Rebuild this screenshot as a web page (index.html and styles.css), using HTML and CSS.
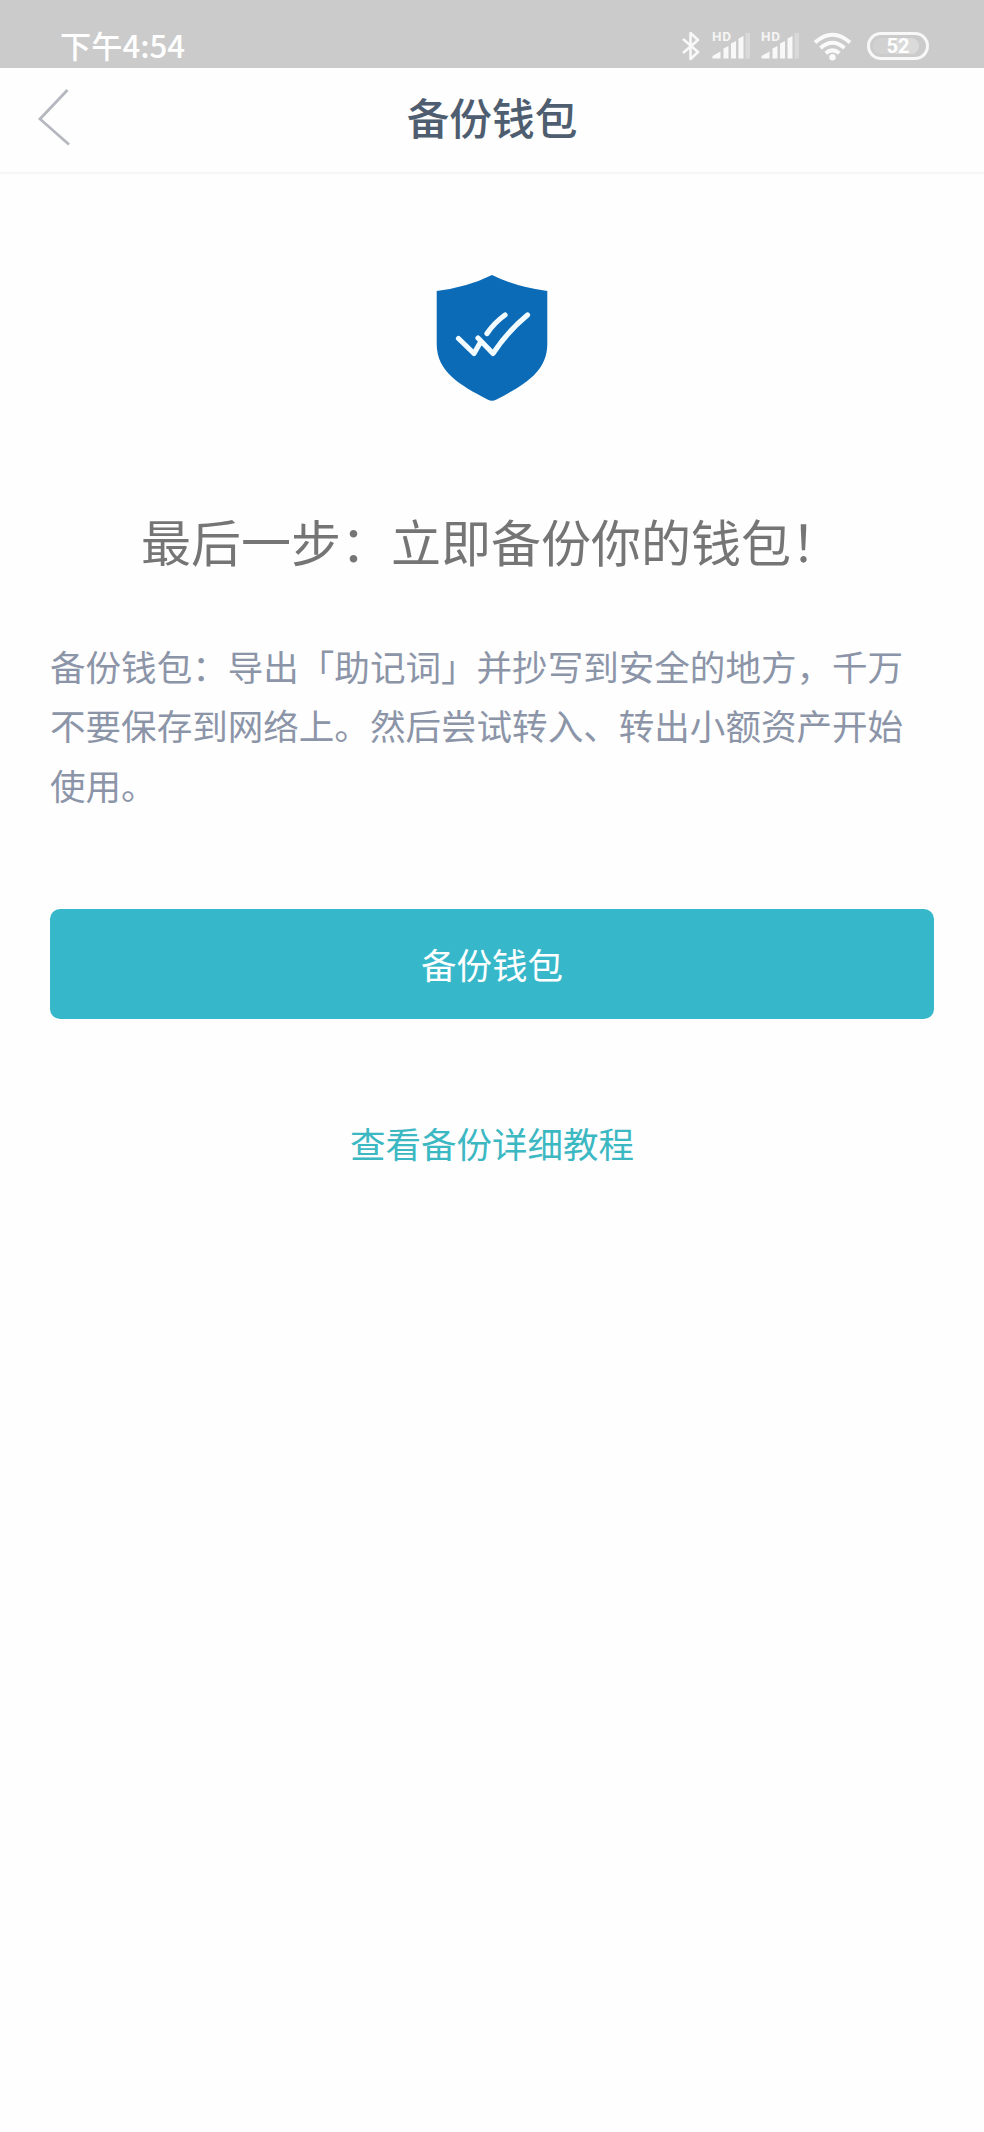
FILE: index.html
```html
<!DOCTYPE html>
<html lang="zh-CN">
<head>
<meta charset="utf-8">
<title>备份钱包</title>
<link rel="stylesheet" href="styles.css">
</head>
<body>
<div class="status">
  <span class="time">下午4:54</span>
  <div class="indicators">
    <svg class="bluetooth" width="20" height="32" viewBox="0 0 20 32"><path d="M2 9L17 22L9.500 29V3L17 10L2 23"/></svg>
    <div class="signal">
      <span class="hd">HD</span>
      <svg width="38" height="28" viewBox="0 0 38 28"><path d="M0.500 26.500V24L8.500 19.500V26.500ZM11.500 26.500V16.500L16.500 14V26.500ZM19 26.500V11.500L24 9V26.500ZM26.500 26.500V6.500L31.500 4V26.500Z"/><path class="faint" d="M33.500 26.500V1H38V26.500Z"/></svg>
    </div>
    <div class="signal">
      <span class="hd">HD</span>
      <svg width="38" height="28" viewBox="0 0 38 28"><path d="M0.500 26.500V24L8.500 19.500V26.500ZM11.500 26.500V16.500L16.500 14V26.500ZM19 26.500V11.500L24 9V26.500ZM26.500 26.500V6.500L31.500 4V26.500Z"/><path class="faint" d="M33.500 26.500V1H38V26.500Z"/></svg>
    </div>
    <svg class="wifi" width="40" height="30" viewBox="0 0 40 30"><path d="M2 10.500Q19.500 -5 37 10.500M7.500 16Q19.500 5.500 31.500 16M12.700 21.300Q19.500 15.500 26.300 21.300"/><circle cx="19.500" cy="25.300" r="3.200"/></svg>
    <div class="battery"><span class="charge"></span><span class="level">52</span></div>
  </div>
</div>
<header class="navbar">
  <svg class="back" width="34" height="60" viewBox="0 0 34 60"><path d="M31.500 2L4 31L33 56.500"/></svg>
  <h1 class="title">备份钱包</h1>
</header>
<main class="content">
  <svg class="shield" width="112" height="128" viewBox="0 0 112 128"><path class="body" d="M56 1Q80 13 111.300 17V70C111.300 98 88 111 60.500 125.500Q56 128 51.500 125.500C24 111 0.700 98 0.700 70V17Q32 13 56 1Z"/><path class="check" d="M22.500 64.500L38 79.500L44 69M42 64L57 79.500Q72 57 91.500 41M51 59.500Q58 49 69 41"/></svg>
  <h2 class="heading">最后一步：立即备份你的钱包！</h2>
  <p class="description">备份钱包：导出「助记词」并抄写到安全的地方，千万<br>不要保存到网络上。然后尝试转入、转出小额资产开始<br>使用。</p>
  <button class="primary">备份钱包</button>
  <a class="tutorial">查看备份详细教程</a>
</main>
</body>
</html>
```
FILE: styles.css
```css
* { box-sizing: border-box; }
body {
  margin: 0;
  min-height: 2132px;
  background: #fefefe;
  font-family: "Noto Sans CJK SC", sans-serif;
}
svg { display: block; flex: none; }
.status {
  display: flex;
  justify-content: space-between;
  align-items: flex-start;
  height: 68px;
  padding: 0 55px 0 60px;
  background: #cbcbcb;
  color: #fff;
}
.time {
  padding-top: 25px;
  font-size: 31.2px;
  font-weight: 500;
  line-height: 40px;
}
.indicators { display: flex; padding-top: 30px; }
.bluetooth {
  margin-right: 11px;
  fill: none;
  stroke: #f8f8f8;
  stroke-width: 2.6;
  stroke-linejoin: round;
}
.signal {
  position: relative;
  width: 38px;
  height: 32px;
  margin-right: 11px;
  padding-top: 2px;
  fill: #f8f8f8;
}
.faint { fill: #d9d9d9; }
.hd {
  position: absolute;
  left: 0;
  top: 0;
  font: bold 13.5px/13px Roboto, sans-serif;
  letter-spacing: 0.6px;
  color: #f5f5f5;
}
.wifi { margin: 2px 14px 0 3px; fill: none; stroke: #fafafa; stroke-width: 4; }
.wifi circle { fill: #fafafa; stroke: none; }
.battery {
  display: flex;
  justify-content: center;
  align-items: center;
  position: relative;
  width: 62px;
  height: 28px;
  margin-top: 2px;
  border: 3px solid #f8f8f8;
  border-radius: 14px;
}
.charge {
  position: absolute;
  left: 3px;
  top: 3px;
  width: 46px;
  height: 16px;
  border-radius: 8px;
  background: linear-gradient(90deg, #d1d1d1 50%, #dadada 50%);
}
.level { position: relative; font: bold 20px/22px Roboto, sans-serif; }
.navbar {
  display: grid;
  grid-template-columns: 100px 1fr 100px;
  height: 106px;
  border-bottom: 2px solid #f6f6f6;
}
.back { margin: 20px 0 0 36px; fill: none; stroke: #b5b8be; stroke-width: 2.8; }
.title {
  margin: 0;
  color: #4e5d6f;
  font-size: 42.7px;
  font-weight: 500;
  line-height: 97px;
  text-align: center;
}
.content {
  display: flex;
  flex-direction: column;
  align-items: center;
  padding: 100px 50px 0;
}
.shield .body { fill: #0b6bb7; }
.shield .check {
  fill: none;
  stroke: #f2fbff;
  stroke-width: 5.2;
  stroke-linecap: round;
  stroke-linejoin: round;
}
.heading {
  align-self: stretch;
  margin: 102px 0 0;
  padding-left: 91px;
  color: #757575;
  font-size: 50px;
  font-weight: 400;
  line-height: 72px;
  white-space: nowrap;
}
.description {
  align-self: stretch;
  margin: 60px 0 0;
  color: #8c95a8;
  font-size: 35.55px;
  line-height: 59.3px;
  white-space: nowrap;
}
.primary {
  align-self: stretch;
  height: 110px;
  margin-top: 95px;
  padding: 0;
  border: 0;
  border-radius: 10px;
  background: #37b8ca;
  color: #fff;
  font: 400 35.5px "Noto Sans CJK SC", sans-serif;
}
.tutorial {
  margin-top: 97px;
  color: #3cb8c3;
  font-size: 35.5px;
  line-height: 54px;
}
```
